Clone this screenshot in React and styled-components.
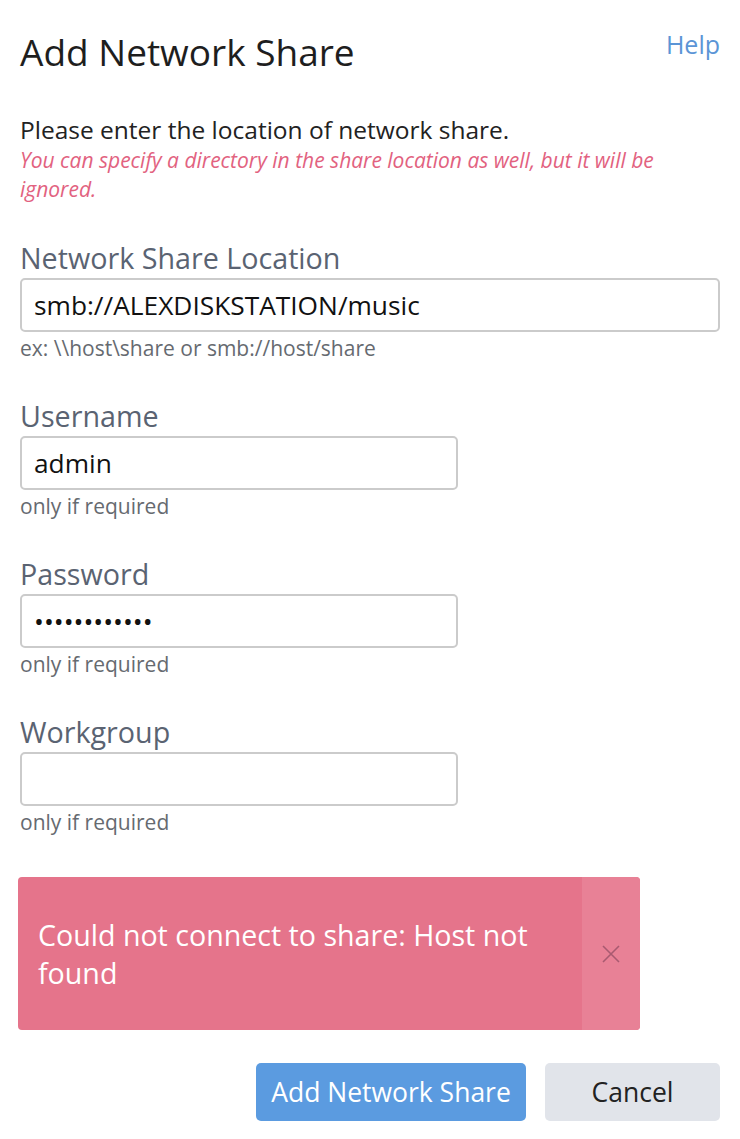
import styled, { createGlobalStyle } from "styled-components";

const GlobalStyle = createGlobalStyle`
  html, body {
    margin: 0;
    padding: 0;
    background: #fff;
  }
  body {
    font-family: "Open Sans", "Noto Sans", sans-serif;
    color: #222;
  }
`;

const Page = styled.div`
  padding: 20px 20px 18px 20px;
`;

const Header = styled.div`
  display: flex;
  justify-content: space-between;
  align-items: flex-start;
`;

const Title = styled.h1`
  margin: 10px 0 0;
  font-size: 37px;
  font-weight: 400;
  line-height: 44px;
  color: #1e1e1e;
`;

const HelpLink = styled.a`
  margin-top: 8px;
  font-size: 25px;
  line-height: 32px;
  color: #5b95d6;
  text-decoration: none;
`;

const Intro = styled.p`
  margin: 40px 0 0;
  font-size: 24.5px;
  line-height: 32px;
  color: #222;
`;

const Note = styled.p`
  margin: 0;
  font-size: 21px;
  line-height: 29px;
  font-style: italic;
  color: #e2627f;
`;

const Fields = styled.div`
  margin-top: 35px;
  display: flex;
  flex-direction: column;
  gap: 35px;
`;

const Field = styled.div`
  display: flex;
  flex-direction: column;
`;

const Label = styled.label`
  font-size: 28.7px;
  line-height: 38px;
  color: #5a6372;
  margin-bottom: 1px;
`;

const Input = styled.input`
  box-sizing: border-box;
  width: ${(p) => (p.$wide ? "700px" : "438px")};
  height: 54px;
  padding: 0 12px;
  border: 2px solid #cbcbcb;
  border-radius: 5px;
  font-family: "Open Sans", "Noto Sans", sans-serif;
  font-size: 26.3px;
  color: #111;
  outline: none;
  background: #fff;
`;

const Hint = styled.div`
  margin-top: 2px;
  font-size: 21px;
  line-height: 28px;
  color: #666a70;
`;

const Alert = styled.div`
  margin: 41px 0 0 -2px;
  width: 622px;
  min-height: 153px;
  display: flex;
  border-radius: 4px;
  overflow: hidden;
  background: #e5748b;
`;

const AlertText = styled.div`
  flex: 1;
  display: flex;
  align-items: center;
  padding: 0 20px;
  font-size: 28.6px;
  line-height: 38px;
  color: #fff;
`;

const CloseButton = styled.button`
  width: 58px;
  border: none;
  background: #e88196;
  display: flex;
  align-items: center;
  justify-content: center;
  padding: 0;
  cursor: pointer;
`;

const Actions = styled.div`
  margin-top: 33px;
  display: flex;
  justify-content: flex-end;
  gap: 19px;
`;

const Button = styled.button`
  height: 58px;
  padding: 0;
  width: ${(p) => (p.$primary ? "270px" : "175px")};
  border: none;
  border-radius: 5px;
  font-family: "Open Sans", "Noto Sans", sans-serif;
  font-size: 26.5px;
  background: ${(p) => (p.$primary ? "#5b9be0" : "#e1e4ea")};
  color: ${(p) => (p.$primary ? "#fff" : "#222")};
  cursor: pointer;
`;

const fields = [
  { label: "Network Share Location", value: "smb://ALEXDISKSTATION/music", hint: "ex: \\\\host\\share or smb://host/share", wide: true },
  { label: "Username", value: "admin", hint: "only if required" },
  { label: "Password", value: "adminpass123", hint: "only if required", type: "password" },
  { label: "Workgroup", value: "", hint: "only if required" },
];

export default function App() {
  return (
    <Page>
      <GlobalStyle />
      <Header>
        <Title>Add Network Share</Title>
        <HelpLink href="#">Help</HelpLink>
      </Header>
      <Intro>Please enter the location of network share.</Intro>
      <Note>You can specify a directory in the share location as well, but it will be ignored.</Note>
      <Fields>
        {fields.map((f) => (
          <Field key={f.label}>
            <Label>{f.label}</Label>
            <Input $wide={f.wide} type={f.type || "text"} defaultValue={f.value} />
            <Hint>{f.hint}</Hint>
          </Field>
        ))}
      </Fields>
      <Alert>
        <AlertText>Could not connect to share: Host not found</AlertText>
        <CloseButton aria-label="Close">
          <svg width="18" height="18" viewBox="0 0 18 18">
            <path d="M1 1L17 17M17 1L1 17" stroke="#a85a70" strokeWidth="1.6" />
          </svg>
        </CloseButton>
      </Alert>
      <Actions>
        <Button $primary>Add Network Share</Button>
        <Button>Cancel</Button>
      </Actions>
    </Page>
  );
}
